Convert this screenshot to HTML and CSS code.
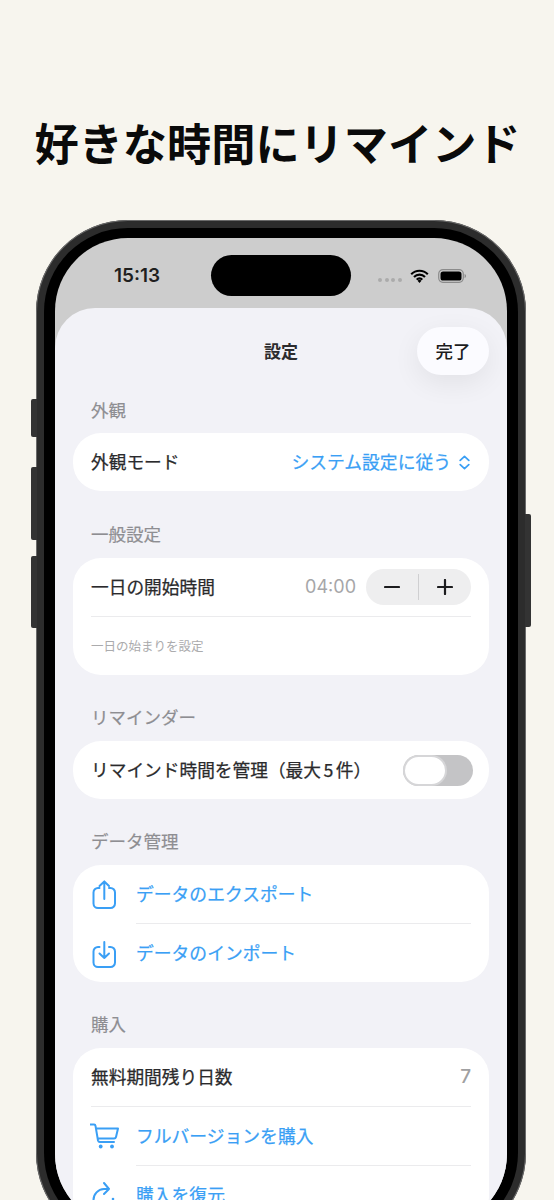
FILE: index.html
```html
<!DOCTYPE html>
<html lang="ja">
<head>
<meta charset="utf-8">
<title>好きな時間にリマインド</title>
<link rel="stylesheet" href="styles.css">
</head>
<body>
<main class="page">
  <h1 class="headline">好きな時間にリマインド</h1>
  <div class="phone">
    <span class="side side-mute"></span>
    <span class="side side-up"></span>
    <span class="side side-down"></span>
    <span class="side side-power"></span>
    <div class="bezel">
      <div class="screen">
        <div class="status">
          <span class="time">15:13</span>
          <span class="island"></span>
          <div class="status-icons">
            <span class="signal"><i></i><i></i><i></i><i></i></span>
            <svg class="wifi" viewBox="0 0 19 14"><path d="M1.2 5.2a11.6 11.6 0 0 1 16.6 0M4 8a7.6 7.6 0 0 1 11 0M6.7 10.6a3.8 3.8 0 0 1 5.6 0" fill="none" stroke="#000" stroke-width="2.1"/><path d="M9.5 14l-2-2.2a2.8 2.8 0 0 1 4 0z"/></svg>
            <svg class="battery" viewBox="0 0 28 14"><rect x=".7" y=".7" width="24.6" height="12.6" rx="4.2" fill="none" stroke="#8b8b8b" stroke-width="1.2"/><rect x="2.5" y="2.5" width="21" height="9" rx="2.6"/><path d="M26.6 5v4c.8-.3 1.4-1 1.4-2s-.6-1.700-1.400-2z" fill="#8b8b8b"/></svg>
          </div>
        </div>
        <div class="sheet">
          <header class="sheet-head">
            <h2 class="sheet-title">設定</h2>
            <button class="done">完了</button>
          </header>

          <section class="group">
            <h3 class="group-label">外観</h3>
            <div class="card">
              <div class="row">
                <span class="row-text">外観モード</span>
                <span class="picker">システム設定に従う
                  <svg class="updown" viewBox="0 0 11 15"><path d="M1.2 5.400L5.500 1.300l4.300 4.100M1.200 9.600l4.300 4.100 4.300-4.100" fill="none" stroke="currentColor" stroke-width="1.700" stroke-linecap="round" stroke-linejoin="round"/></svg>
                </span>
              </div>
            </div>
          </section>

          <section class="group">
            <h3 class="group-label">一般設定</h3>
            <div class="card">
              <div class="row">
                <span class="row-text">一日の開始時間</span>
                <div class="row-end">
                  <span class="value">04:00</span>
                  <div class="stepper">
                    <span class="step"><svg viewBox="0 0 16 16"><path d="M1 8h14" stroke="#1c1c1e" stroke-width="2.200" stroke-linecap="round"/></svg></span>
                    <span class="step"><svg viewBox="0 0 16 16"><path d="M1 8h14M8 1v14" stroke="#1c1c1e" stroke-width="2.200" stroke-linecap="round"/></svg></span>
                  </div>
                </div>
              </div>
              <hr class="rule">
              <div class="row"><span class="note">一日の始まりを設定</span></div>
            </div>
          </section>

          <section class="group">
            <h3 class="group-label">リマインダー</h3>
            <div class="card">
              <div class="row">
                <span class="row-text">リマインド時間を管理（最大<span class="num">5</span>件）</span>
                <span class="toggle"><span class="knob"></span></span>
              </div>
            </div>
          </section>

          <section class="group">
            <h3 class="group-label">データ管理</h3>
            <div class="card">
              <div class="row row-action">
                <svg class="icon" viewBox="0 0 30 30"><path d="M9.500 9H8a4.500 4.500 0 0 0-4.500 4.500v11A4.500 4.500 0 0 0 8 29h12.500a4.500 4.500 0 0 0 4.500-4.500v-11A4.500 4.500 0 0 0 20.500 9H19M14.300 20V2.500M9.500 7l4.800-4.500L19 7"/></svg>
                <span class="link">データのエクスポート</span>
              </div>
              <hr class="rule rule-inset">
              <div class="row row-action">
                <svg class="icon" viewBox="0 0 30 30"><path d="M9.500 9H8a4.500 4.500 0 0 0-4.500 4.500v11A4.500 4.500 0 0 0 8 29h12.500a4.500 4.500 0 0 0 4.500-4.500v-11A4.500 4.500 0 0 0 20.500 9H19M14.300 4v16M9.500 15.500l4.800 4.500 4.700-4.500"/></svg>
                <span class="link">データのインポート</span>
              </div>
            </div>
          </section>

          <section class="group">
            <h3 class="group-label">購入</h3>
            <div class="card">
              <div class="row">
                <span class="row-text">無料期間残り日数</span>
                <span class="count">7</span>
              </div>
              <hr class="rule">
              <div class="row row-action">
                <svg class="icon" viewBox="0 0 30 30"><path d="M.5 3.500H4a1.500 1.500 0 0 1 1.500 1.300L8 19.500a2 2 0 0 0 2 1.500h14M6 7.500h22L26 16a2 2 0 0 1-2 1.500H8"/><circle class="dot" cx="10.700" cy="25.500" r="1.900"/><circle class="dot" cx="22" cy="25.500" r="1.900"/></svg>
                <span class="link">フルバージョンを購入</span>
              </div>
              <hr class="rule rule-inset">
              <div class="row row-action">
                <svg class="icon" viewBox="0 0 30 30"><path d="M19 9h-5A11 11 0 0 0 3.500 20 11 11 0 0 0 14.500 31M14 3l5 6-5 5"/><circle class="dot" cx="23" cy="19" r="1.300"/></svg>
                <span class="link">購入を復元</span>
              </div>
            </div>
          </section>
        </div>
      </div>
    </div>
  </div>
</main>
</body>
</html>
```

FILE: styles.css
```css
* { box-sizing: border-box; }
html, body { margin: 0; height: 1200px; overflow: hidden; }
body {
  background: #f7f5ee;
  font-family: Inter, "Noto Sans CJK JP", "Noto Sans", sans-serif;
  color: #2c2c2e;
}
.page { height: 1200px; overflow: hidden; }
.headline {
  margin: 114px 0 50px;
  padding-left: 1px;
  height: 56px;
  font: 700 44.200px/56px "Noto Sans CJK JP", sans-serif;
  color: #0a0a0a;
  text-align: center;
  white-space: nowrap;
}
.phone {
  position: relative;
  width: 490px;
  height: 1025px;
  margin-left: 36px;
  padding: 8px;
  border-radius: 92px;
  background: #2c2c2c;
  box-shadow: inset 0 0 0 1px #6a6a6a;
}
.side { position: absolute; width: 6px; background: #333; }
.side-mute { left: -5px; top: 179px; height: 38px; border-radius: 2px 0 0 2px; }
.side-up { left: -5px; top: 247px; height: 73px; border-radius: 2px 0 0 2px; }
.side-down { left: -5px; top: 336px; height: 72px; border-radius: 2px 0 0 2px; }
.side-power { right: -5px; top: 294px; height: 113px; border-radius: 0 2px 2px 0; }
.bezel {
  height: 100%;
  padding: 10px 11px;
  border-radius: 84px;
  background: #000;
}
.screen {
  height: 100%;
  border-radius: 73px;
  background: #cdcdcd;
  overflow: hidden;
}
.status {
  display: grid;
  grid-template-columns: 156px 140px 156px;
  align-items: center;
  height: 70px;
  padding-bottom: 12px;
  padding-top: 17px;
}
.time {
  padding-left: 59px;
  font: 600 19px/24px Inter, sans-serif;
  color: #1f1f1f;
}
.island { height: 41px; border-radius: 21px; background: #000; }
.status-icons { display: flex; align-items: center; padding-left: 27px; }
.signal { display: flex; gap: 2.500px; margin: 9px 8px 0 0; }
.signal i { width: 4px; height: 4px; border-radius: 50%; background: #ababab; }
.wifi { width: 19px; height: 14px; }
.battery { width: 28px; height: 14px; margin-left: 9px; }

.sheet {
  height: 100%;
  padding: 19px 18px 0;
  border-radius: 40px 40px 0 0;
  background: #f2f2f7;
}
.sheet-head {
  display: grid;
  grid-template-columns: 72px 1fr 72px;
  align-items: center;
  height: 48px;
  margin-bottom: 23px;
}
.sheet-title {
  grid-column: 2;
  margin: 0;
  font: 700 17px/24px "Noto Sans CJK JP", sans-serif;
  color: #2c2c2e;
  text-align: center;
}
.done {
  grid-column: 3;
  height: 48px;
  padding: 0;
  border: 0;
  border-radius: 24px;
  background: #fbfbff;
  box-shadow: 0 8px 28px rgba(0, 0, 0, .07);
  font: 500 17.500px/24px "Noto Sans CJK JP", sans-serif;
  color: #1c1c1e;
}
.group { margin-bottom: 30px; }
.sheet-head + .group { margin-bottom: 31px; }
.group-label {
  margin: 0 0 12px;
  padding-left: 18px;
  font: 400 17.500px/24px "Noto Sans CJK JP", sans-serif;
  color: #8e8e92;
  -webkit-text-stroke: .2px #8e8e92;
}
.sheet-head + .group .group-label { margin-bottom: 11px; }
.card {
  border-radius: 28px;
  background: #fff;
}
.row {
  display: flex;
  align-items: center;
  justify-content: space-between;
  height: 58px;
  padding: 0 18px;
}
.row-text {
  margin-bottom: 2px;
  font: 400 17.700px/24px "Noto Sans CJK JP", sans-serif;
  color: #2a2a2c;
  -webkit-text-stroke: .25px #2a2a2c;
  white-space: nowrap;
}
.num { padding: 0 2.500px; }
.row-end { display: flex; align-items: center; gap: 10px; }
.row-action { justify-content: flex-start; padding-left: 17px; gap: 16px; }
.rule {
  height: 1px;
  margin: 0 18px;
  border: 0;
  background: #ebebed;
}
.rule-inset { margin-left: 63px; }
.picker {
  display: flex;
  align-items: center;
  gap: 8px;
  margin-bottom: 2px;
  font: 400 17.800px/24px "Noto Sans CJK JP", sans-serif;
  color: #3a9ff5;
  -webkit-text-stroke: .25px #3a9ff5;
}
.updown { width: 11px; height: 15px; margin: 2px 1px 0 0; }
.value {
  font: 400 18px/24px Inter, sans-serif;
  color: #a6a6a8;
}
.count {
  font: 500 19px/24px Inter, sans-serif;
  color: #a0a0a2;
}
.stepper {
  display: flex;
  width: 105px;
  height: 36px;
  border-radius: 18px;
  background: #eeeeef;
}
.step {
  flex: 1;
  display: flex;
  align-items: center;
  justify-content: center;
}
.step:first-child { position: relative; }
.step:first-child::after {
  content: "";
  position: absolute;
  right: 0;
  top: 5px;
  bottom: 5px;
  width: 1px;
  background: #cfcfd1;
}
.step svg { width: 16px; height: 16px; }
.note {
  margin-bottom: 1px;
  font: 400 12.500px/18px "Noto Sans CJK JP", sans-serif;
  color: #ababad;
}
.toggle {
  display: block;
  width: 70px;
  height: 31px;
  margin-right: -2px;
  border-radius: 16px;
  background: #c4c4c6;
}
.knob {
  display: block;
  width: 44px;
  height: 31px;
  border: 2px solid #d6d6d8;
  border-radius: 16px;
  background: #fff;
}
.icon {
  flex: none;
  width: 30px;
  height: 30px;
  overflow: hidden;
  fill: none;
  stroke: #3a9ff5;
  stroke-width: 2;
  stroke-linecap: round;
  stroke-linejoin: round;
}
.icon .dot { fill: #3a9ff5; stroke: none; }
.link {
  margin-bottom: 2px;
  font: 400 17.800px/24px "Noto Sans CJK JP", sans-serif;
  color: #3a9ff5;
  -webkit-text-stroke: .25px #3a9ff5;
  white-space: nowrap;
}
```
